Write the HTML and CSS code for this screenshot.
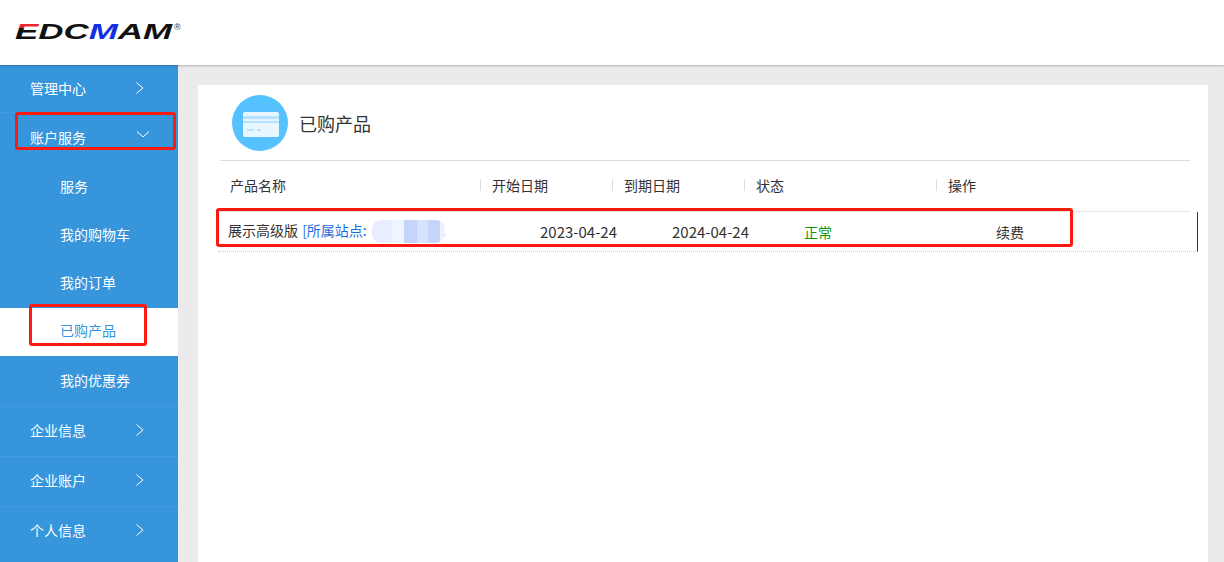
FILE: index.html
```html
<!DOCTYPE html>
<html lang="zh-CN">
<head>
<meta charset="utf-8">
<title>已购产品</title>
<link rel="stylesheet" href="styles.css">
</head>
<body>
<header class="topbar">
  <svg class="logo" width="170" height="24" viewBox="0 0 170 24" aria-label="EDCMAM">
    <defs>
      <linearGradient id="logoE" x1="0" y1="0" x2="0" y2="1">
        <stop offset="0.36" stop-color="#e8282c"/>
        <stop offset="0.36" stop-color="#111"/>
      </linearGradient>
    </defs>
    <text class="logo-text" x="0" y="20" textLength="157" lengthAdjust="spacingAndGlyphs"><tspan fill="url(#logoE)">E</tspan><tspan fill="#111">DC</tspan><tspan fill="#1230e0">M</tspan><tspan fill="#111">AM</tspan></text>
    <text class="logo-reg" x="159" y="11">®</text>
  </svg>
</header>
<div class="layout">
  <nav class="sidebar">
    <a class="nav-item nav-first"><span>管理中心</span><svg class="chev" width="10" height="14" viewBox="0 0 10 14"><path d="M1.5 1.5 8 7l-6.500 5.500"/></svg></a>
    <a class="nav-item nav-open"><span>账户服务</span><svg class="chev chev-down" width="14" height="10" viewBox="0 0 14 10"><path d="M1 1.500 7 7l6-5.500"/></svg></a>
    <a class="sub-item">服务</a>
    <a class="sub-item">我的购物车</a>
    <a class="sub-item">我的订单</a>
    <a class="sub-item sub-active">已购产品</a>
    <a class="sub-item sub-last">我的优惠券</a>
    <a class="nav-item nav-rule"><span>企业信息</span><svg class="chev" width="10" height="14" viewBox="0 0 10 14"><path d="M1.5 1.5 8 7l-6.500 5.500"/></svg></a>
    <a class="nav-item nav-rule"><span>企业账户</span><svg class="chev" width="10" height="14" viewBox="0 0 10 14"><path d="M1.5 1.5 8 7l-6.500 5.500"/></svg></a>
    <a class="nav-item nav-rule"><span>个人信息</span><svg class="chev" width="10" height="14" viewBox="0 0 10 14"><path d="M1.5 1.5 8 7l-6.500 5.500"/></svg></a>
  </nav>
  <main class="content">
    <section class="card">
      <div class="title-row">
        <svg class="title-icon" width="56" height="56" viewBox="0 0 56 56">
          <circle cx="28" cy="28" r="28" fill="#56c1ff"/>
          <rect x="11" y="17" width="36" height="25" rx="2" fill="#e8f6ff"/>
          <rect x="11" y="21" width="36" height="3" fill="#b5e3ff"/>
          <rect x="11" y="26" width="36" height="2" fill="#b5e3ff"/>
          <rect x="15" y="34" width="7" height="2" fill="#b5e3ff"/>
          <rect x="25" y="34" width="4" height="2" fill="#b5e3ff"/>
        </svg>
        <h1 class="title">已购产品</h1>
      </div>
      <div class="thead">
        <div class="th th-name">产品名称</div>
        <div class="th">开始日期</div>
        <div class="th">到期日期</div>
        <div class="th">状态</div>
        <div class="th">操作</div>
      </div>
      <div class="trow">
        <div class="td"><span>展示高级版</span> <span class="site">[所属站点: <i class="blur"></i><span class="dot">.</span></span></div>
        <div class="td date">2023-04-24</div>
        <div class="td date">2024-04-24</div>
        <div class="td status">正常</div>
        <div class="td">续费</div>
      </div>
    </section>
  </main>
</div>
<div class="mark mark-nav"></div>
<div class="mark mark-sub"></div>
<div class="mark mark-row"></div>
</body>
</html>
```
FILE: styles.css
```css
* { box-sizing: border-box; }
html, body { height: 100%; }
body {
  margin: 0;
  overflow: hidden;
  background: #ebebed;
  color: #333;
  font: 14px/20px "Noto Sans CJK SC", "Noto Sans", sans-serif;
}
.topbar {
  height: 65px;
  padding: 19px 0 0 15px;
  background: #fff;
  box-shadow: 0 1px 2px rgba(0,0,0,.25);
  position: relative;
}
.logo { display: block; overflow: visible; }
.logo-text { font: italic 700 22px "Liberation Sans", sans-serif; }
.logo-reg { font: 700 9px "Liberation Sans", sans-serif; fill: #666; }
.layout { display: flex; height: calc(100vh - 65px); }
.sidebar {
  flex: 0 0 178px;
  background: #3695db;
  color: #fff;
}
.nav-item {
  display: flex;
  align-items: center;
  justify-content: space-between;
  height: 50px;
  padding: 0 33px 0 30px;
}
.nav-first { height: 48px; padding-bottom: 1px; border-bottom: 1px solid #429bdc; }
.nav-open { padding-bottom: 2px; }
.nav-rule { padding-bottom: 4px; border-top: 1px solid #429bdc; }
.chev { fill: none; stroke: #fff; stroke-width: 1; }
.chev-down { margin-right: -5px; margin-top: -4px; }
.sub-item { display: block; height: 48px; padding: 13px 0 0 60px; }
.sub-item:nth-of-type(5) { height: 49px; }
.sub-active { background: #fff; color: #3695db; padding-top: 12px; }
.sub-last { height: 50px; padding-top: 14px; }
.content { flex: 1; min-width: 0; padding: 20px 16px 0 20px; }
.card { height: 100%; background: #fff; padding: 10px 0 0 22px; }
.title-row {
  display: flex;
  align-items: center;
  gap: 12px;
  width: 970px;
  height: 66px;
  padding: 0 0 9px 12px;
  border-bottom: 1px solid #ddd;
}
.title-icon { display: block; flex: none; }
.title { margin: 0 0 0 -1px; font-size: 18px; font-weight: 400; color: #333; }
.thead, .trow { display: grid; }
.thead {
  grid-template-columns: 260px 132px 132px 192px 1fr;
  width: 970px;
  height: 51px;
  padding-bottom: 2px;
  align-items: center;
  border-bottom: 1px solid #e4e4e4;
}
.th { position: relative; padding-left: 12px; }
.th-name { padding-left: 10px; }
.th:not(.th-name)::before {
  content: "";
  position: absolute;
  left: 0;
  top: 4px;
  height: 12px;
  border-left: 1px solid #ddd;
}
.trow {
  grid-template-columns: 312px 132px 132px 192px 1fr;
  width: 980px;
  height: 40px;
  margin-left: -2px;
  padding-left: 10px;
  align-items: center;
  border-bottom: 1px dotted #ccc;
  border-right: 1px solid #333;
}
.td { white-space: nowrap; }
.date { font-size: 15px; }
.site { color: #1a6fe0; margin-left: 1px; }
.blur {
  display: inline-block;
  width: 73px;
  height: 23px;
  margin-left: 2px;
  vertical-align: middle;
  border-radius: 9px;
  background: linear-gradient(90deg, #e8edff 0 27%, #f0f4ff 27% 44%, #c6d4fb 44% 61%, #d8e2fd 61% 77%, #c6d5fb 77% 93%, #eef2ff 93% 100%);
  filter: blur(.7px);
}
.dot { margin-left: -3px; }
.status { color: #0a9a0a; }
.mark {
  position: absolute;
  border: 3px solid #fb1a10;
  border-radius: 3px;
  pointer-events: none;
}
.mark-nav { left: 15px; top: 112px; width: 161px; height: 38px; }
.mark-sub { left: 29px; top: 304px; width: 118px; height: 42px; }
.mark-row { left: 216px; top: 208px; width: 857px; height: 39px; }
```
